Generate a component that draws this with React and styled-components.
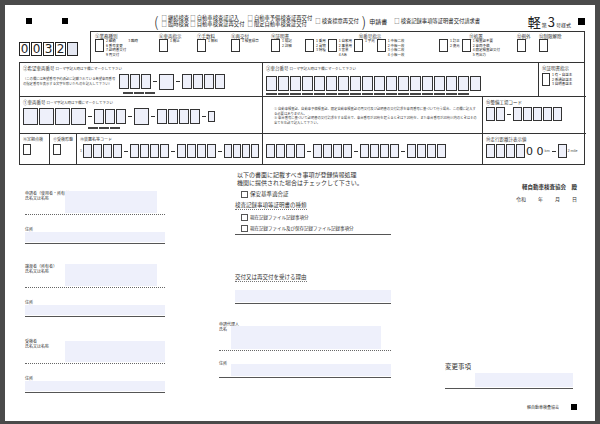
import React from "react";
import styled, { createGlobalStyle } from "styled-components";

const G = createGlobalStyle`
  html,body{margin:0;padding:0;background:#4a4a4a;}
  *{box-sizing:border-box;}
  body{font-family:"Noto Sans CJK JP","Noto Sans",sans-serif;color:#222;}
`;
const Page = styled.div`
  width:600px;height:424px;padding:5px 5px 3px 5px;
`;
const Paper = styled.div`
  width:590px;height:416px;background:#fff;position:relative;padding:6px 10px 0 14px;
  display:flex;flex-direction:column;
`;
const Sq = styled.span`display:inline-block;flex:none;width:${p=>p.s||6}px;height:${p=>p.s||6}px;background:#000;`;
const Header = styled.div`display:flex;align-items:center;height:20px;font-size:5.3px;gap:3px;white-space:nowrap;`;
const Col = styled.div`display:flex;flex-direction:column;line-height:6.5px;`;
const Paren = styled.span`font-size:14px;line-height:14px;font-weight:200;`;
const Form = styled.span`margin-left:auto;display:flex;align-items:baseline;gap:1px;font-size:5px;margin-right:4px;
  b{font-size:13px;font-weight:400}`;
const TopRow = styled.div`display:flex;height:31px;`;
const Digits = styled.div`display:flex;width:71px;align-items:center;padding-top:4px;`;
const Dig = styled.span`width:11px;height:14px;border:1px solid #222;font-size:12px;line-height:12px;text-align:center;font-family:"DejaVu Sans",sans-serif;
  background:${p=>p.e?'#e4e7f2':'#fff'};margin-right:1px;`;
const TopGrid = styled.div`flex:1;border:1px solid #333;border-bottom:none;display:flex;padding:1px 4px;gap:4px;font-size:4px;`;
const Cell = styled.div`display:flex;flex-direction:column;width:${p=>p.w}px;`;
const Lbl = styled.div`font-size:${p=>p.f||4.5}px;color:#333;white-space:nowrap;line-height:6px;`;
const BoxRow = styled.div`display:flex;align-items:flex-start;gap:2px;line-height:4.5px;font-size:3.5px;white-space:nowrap;`;
const Box = styled.span`display:block;flex:none;width:${p=>p.w||10}px;height:${p=>p.h||15}px;min-height:${p=>p.h||15}px;border:1px solid #333;background:${p=>p.bg||'#fff'};`;
const Table = styled.div`border:1.5px solid #333;display:grid;grid-template-columns:243px 220px 56px 47px;grid-template-rows:34px 37px 30px;`;
const T = styled.div`border-right:${p=>p.nr?'none':'1px solid #333'};border-bottom:${p=>p.nb?'none':'1px solid #333'};padding:2px 3px;
  grid-column:${p=>p.c||'auto'};grid-row:${p=>p.r||'auto'};display:flex;flex-direction:column;gap:2px;font-size:4px;position:relative;`;
const Line = styled.div`display:flex;align-items:center;gap:1px;`;
const Dash = styled.span`width:4px;height:1px;background:#333;margin:0 1px;flex:none;`;
const Small = styled.span`font-size:3.5px;color:#444;line-height:4.5px;`;
const B = ({n,w=10,h=15,bg='#eef0fa'})=><>{Array.from({length:n}).map((_,i)=><Box key={i} w={w} h={h} bg={bg}/>)}</>;
const Under = styled.div`display:flex;gap:1px;margin-left:${p=>p.ml||0}px;`;
const U = styled.span`width:${p=>p.w||10}px;height:2px;border:0.5px solid #444;`;

const Bottom = styled.div`display:grid;grid-template-columns:140px 172px 1fr;column-gap:54px;padding:4px 8px 0 6px;flex:1;`;
const Column = styled.div`display:flex;flex-direction:column;`;
const Field = styled.div`display:flex;margin-top:${p=>p.mt||0}px;border-bottom:${p=>p.dot?'1px dotted #666':'1.5px solid #555'};
  padding-bottom:1px;align-items:flex-start;`;
const FLabel = styled.div`font-size:4px;line-height:5px;width:${p=>p.w||40}px;flex:none;color:#333;white-space:nowrap;`;
const Fill = styled.div`background:#eef0fb;height:${p=>p.h}px;flex:1;margin-top:${p=>p.mt||0}px;margin-right:${p=>p.mr||0}px;`;
const Mid = styled.div`font-size:${p=>p.f||6}px;line-height:8px;color:#333;margin-top:${p=>p.mt||0}px;margin-left:${p=>p.ml||0}px;white-space:nowrap;
  display:flex;align-items:center;gap:2px;${p=>p.u?'border-bottom:1px dotted #777;align-self:flex-start;':''}`;
const Chk = styled.span`width:7px;height:7px;border:1px solid #555;display:inline-block;`;

function Tb(){
  return (
    <Table>
      <T>
        <Lbl>②希望車両番号 <Small>ローマ字記入時は下欄にマークして下さい</Small></Lbl>
        <Line>
          <Small style={{width:95,fontSize:3.3}}>（この欄には希望番号予約済証に記載されている希望車両番号の指定番号を表示する文字を除いたものを記入して下さい）</Small>
          <B n={3}/><Dash/><B n={1} w={15} h={16}/><Dash/><B n={4}/>
        </Line>
        <Under ml={100}><U/><U/><U/></Under>
      </T>
      <T c="2 / 4">
        <Lbl>③車台番号 <Small>ローマ字記入時は下欄にマークして下さい</Small></Lbl>
        <Line style={{marginTop:2}}><B n={18} w={11}/></Line>
        <Under>{Array.from({length:17}).map((_,i)=><U key={i} w={11}/>)}</Under>
      </T>
      <T nr>
        <Lbl>⑭証明書指示</Lbl>
        <BoxRow><Box w={8} h={13}/><span>1 有・自送主<br/>2 係通証送主<br/>3 自明書送主</span></BoxRow>
      </T>
      <T>
        <Lbl>①車両番号 <Small>ローマ字記入時は下欄にマークして下さい</Small></Lbl>
        <Line>
          <B n={4} w={15} h={17}/><Dash/><B n={3}/><Dash/><B n={1} w={15} h={17}/><Dash/><B n={4}/><Dash/><B n={1} w={7} h={11}/>
        </Line>
        <Under ml={65}><U/><U/><U/></Under>
      </T>
      <T>
        <Small style={{fontSize:3.3,marginTop:8,paddingLeft:8}}>① 自動車検査証、自動車予備検査証、限定自動車検査証の再交付及び証明書の交付請求を車両番号に基づいて行う場合、この欄に記入する必要はありません。<br/>② 車台番号に基づいて証明書の交付請求をする場合で、車台番号が20桁を超えるときは下20桁を、また車台番号が20桁以内のときはその全てを左詰で記入して下さい。</Small>
      </T>
      <T c="3 / 5" nr>
        <Lbl>⑮整備工場コード</Lbl>
        <Line><B n={2} w={9} h={14}/><Dash/><B n={5} w={9} h={14}/></Line>
      </T>
      <T nb style={{flexDirection:'row',padding:0,gap:0}}>
        <T nb style={{width:32}}><Lbl f={4}>⑯定期点検</Lbl><Box w={8} h={11}/></T>
        <T nb style={{width:28}}><Lbl f={4}>⑰受検形態</Lbl><Box w={8} h={11}/></T>
        <T nb nr style={{flex:1}}><Lbl f={4}>⑱装置名等コード</Lbl>
          <Line><Small>1</Small><B n={4} w={9} h={14}/><Dash/><B n={4} w={9} h={14}/><Dash/><B n={4} w={9} h={14}/><Dash/><B n={4} w={8} h={14}/></Line>
        </T>
      </T>
      <T nb>
        <Lbl f={4}>&nbsp;</Lbl>
        <Line><B n={4} w={9} h={14}/><Dash/><B n={4} w={9} h={14}/><Dash/><B n={4} w={9} h={14}/><Dash/><B n={4} w={9} h={14}/></Line>
      </T>
      <T c="3 / 5" nb nr>
        <Lbl>⑲走行距離計表示値</Lbl>
        <Line><B n={4} w={9} h={14}/><span style={{fontSize:11,lineHeight:'11px',fontFamily:'DejaVu Sans'}}>0 0</span><Small>km</Small><Dash/><B n={1} w={9} h={14}/><Small>2 mile</Small></Line>
      </T>
    </Table>
  );
}

export default function App(){
  return (<Page><G/><Paper>
    <Header>
      <span style={{width:4}}/><Sq/><span style={{width:24}}/><Sq/><span style={{width:80}}/>
      <Paren>(</Paren>
      <Col><span>□ 継続検査 □ 自動車検査証記入</span><span>□ 臨時検査 □ 自動車検査証再交付</span></Col>
      <Col><span>□ 自動車予備検査証再交付</span><span>□ 限定自動車検査証交付</span></Col>
      <span>□ 検査標章再交付</span>
      <Paren>)</Paren>
      <span style={{fontSize:6}}>申請書</span>
      <span style={{marginLeft:4}}>□ 検査記録事項等証明書交付請求書</span>
      <Form><b>軽</b>第<b>3</b>号様式</Form><Sq s={7}/>
    </Header>
    <TopRow>
      <Digits>{['0','0','3','2',''].map((d,i)=><Dig key={i} e={!d}>{d}</Dig>)}</Digits>
      <TopGrid>
        <Cell w={60}><Lbl>⑤業務種別</Lbl><BoxRow><Box w={9} h={13}/><span>2 継続<br/>6 番号変更<br/>7 証明書交付<br/>9 再交付</span><span>3 臨時</span></BoxRow></Cell>
        <Cell w={34}><Lbl>⑥車両指示</Lbl><BoxRow><Box w={9} h={13}/><span>1 廃止</span></BoxRow></Cell>
        <Cell w={30}><Lbl>⑦手数料</Lbl><BoxRow><Box w={9} h={13}/><span>1 無料</span></BoxRow></Cell>
        <Cell w={36}><Lbl>⑧再交付</Lbl><BoxRow><Box w={9} h={13}/><span>1 検査標章</span></BoxRow></Cell>
        <Cell w={30}><Lbl>⑨証明書</Lbl><BoxRow><Box w={9} h={13}/><span>1 現記<br/>2 詳細</span></BoxRow></Cell>
        <Cell w={130}><Lbl style={{textAlign:'center'}}>⑩番号指示</Lbl><BoxRow><Box w={9} h={13}/><span>1 乗用<br/>2 貨物<br/>3 特種</span><Box w={9} h={13}/><span>1 自家用<br/>2 事業用<br/>3 営業<br/>4 Aあ</span><Box w={9} h={13}/><span>1 字光</span><Box w={9} h={13}/><span>1 中板二枚<br/>2 中板一枚<br/>3 小板二枚<br/>4 小板一枚</span></BoxRow></Cell>
        <Cell w={74}><Lbl style={{textAlign:'center'}}>⑪処置</Lbl><BoxRow><Box w={9} h={13}/><span>1 訂正<br/>2 復元</span><Box w={9} h={13}/><span>1 検査証不要<br/>2 車両予備<br/>4 限定検査証交付<br/>5 再出力</span></BoxRow></Cell>
        <Cell w={18}><Lbl>⑫例外</Lbl><Box w={9} h={13}/></Cell>
        <Cell w={24}><Lbl>⑬制限解除</Lbl><Box w={9} h={13}/></Cell>
      </TopGrid>
    </TopRow>
    <Tb/>
    <Bottom>
      <Column>
        <Field dot mt={22}><FLabel>申請者（使用者・所有者）<br/>氏名又は名称</FLabel><Fill h={22} mr={8}/></Field>
        <Field mt={12}><div style={{flex:1}}><FLabel>住所</FLabel><Fill h={10}/></div></Field>
        <Field dot mt={20}><FLabel>譲渡者（所有者）<br/>氏名又は名称</FLabel><Fill h={22} mr={8}/></Field>
        <Field mt={12}><div style={{flex:1}}><FLabel>住所</FLabel><Fill h={10}/></div></Field>
        <Field dot mt={22}><FLabel>受検者<br/>氏名又は名称</FLabel><Fill h={21} mt={2}/></Field>
        <Field mt={12}><div style={{flex:1}}><FLabel>住所</FLabel><Fill h={10}/></div></Field>
      </Column>
      <Column>
        <Mid mt={2} ml={18}>以下の書面に記載すべき事項が登録情報処理<br/>機関に提供された場合はチェックして下さい。</Mid>
        <Mid mt={3} ml={22} f={5.5}><Chk/>保安基準適合証</Mid>
        <Mid mt={3} ml={16} f={5.5} u>検査記録事項等証明書の種類</Mid>
        <div style={{borderBottom:'1.5px solid #555',marginLeft:16,paddingBottom:2}}>
          <Mid mt={3} ml={6} f={4.5}><Chk/>現在記録ファイル記録事項分</Mid>
          <Mid mt={3} ml={6} f={4.5}><Chk/>現在記録ファイル及び保存記録ファイル記録事項分</Mid>
        </div>
        <Mid mt={38} ml={16} f={5.5} u>交付又は再交付を受ける理由</Mid>
        <Field mt={8} style={{marginLeft:16}}><Fill h={12}/></Field>
        <Field dot mt={18}><FLabel w={12}>申請代理人<br/>氏名</FLabel><Fill h={23} mt={4} mr={10}/></Field>
        <Field mt={10}><FLabel w={12}>住所</FLabel><Fill h={12} mt={3}/></Field>
      </Column>
      <Column style={{alignItems:'flex-end'}}>
        <Mid mt={14} f={5.5} style={{fontWeight:700}}>軽自動車検査協会　殿</Mid>
        <Mid mt={4} f={5} style={{gap:12}}><span>令和</span><span>年</span><span>月</span><span>日</span></Mid>
        <div style={{flex:1}}/>
        <div style={{alignSelf:'stretch',paddingRight:4}}>
          <Mid f={6.5}>変更事項</Mid>
          <Field mt={3}><span style={{width:30}}/><Fill h={14}/></Field>
        </div>
        <Mid mt={14} f={4} style={{gap:12,marginBottom:10}}><span>軽自動車検査協会</span><Sq/></Mid>
      </Column>
    </Bottom>
  </Paper></Page>);
}
